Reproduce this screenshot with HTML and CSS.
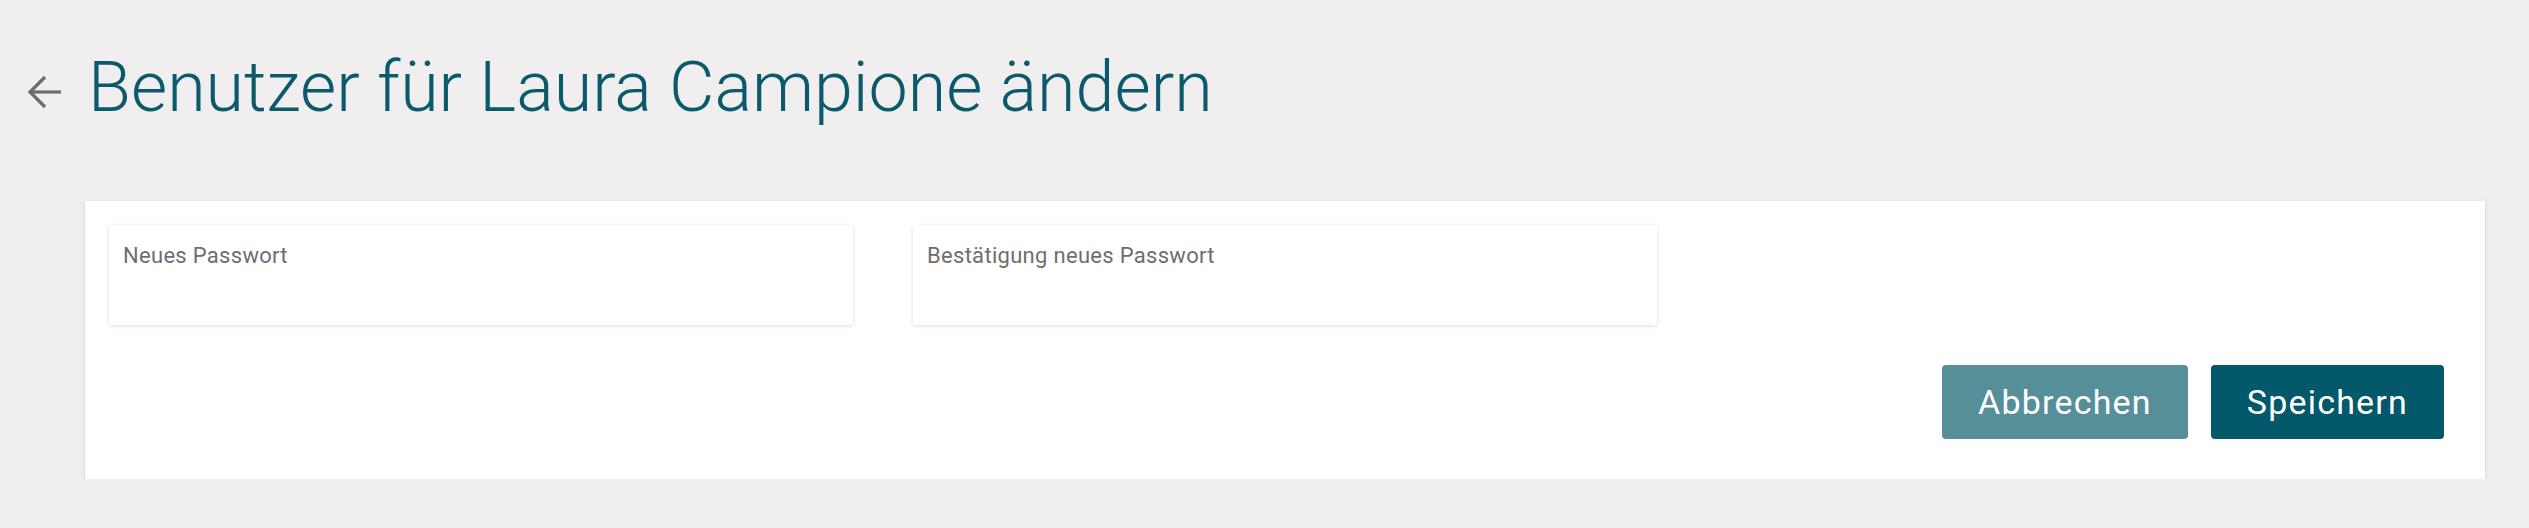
FILE: index.html
```html
<!DOCTYPE html>
<html lang="de">
<head>
<meta charset="utf-8">
<title>Benutzer ändern</title>
<link rel="stylesheet" href="styles.css">
</head>
<body>
<header class="page-header">
  <a class="back" href="#" aria-label="Zurück">
    <svg width="36" height="36" viewBox="0 0 36 36" fill="none" stroke="#6c6c6c" stroke-width="3.2" stroke-linecap="butt" stroke-linejoin="miter">
      <path d="M3 18 H34"/>
      <path d="M18 3 L3 18 L18 33"/>
    </svg>
  </a>
  <h1 class="title">Benutzer für Laura Campione ändern</h1>
</header>
<main class="content">
  <section class="card">
    <div class="fields">
      <label class="field"><span class="field-label">Neues Passwort</span></label>
      <label class="field"><span class="field-label">Bestätigung neues Passwort</span></label>
    </div>
    <div class="actions">
      <button class="btn btn-secondary" type="button">Abbrechen</button>
      <button class="btn btn-primary" type="button">Speichern</button>
    </div>
  </section>
</main>
</body>
</html>
```
FILE: styles.css
```css
* { box-sizing: border-box; }

html, body {
  margin: 0;
  padding: 0;
  background: #f0eeef;
  font-family: Roboto, "Liberation Sans", Arial, sans-serif;
}

.page-header {
  display: flex;
  align-items: center;
  padding: 46px 0 0 27px;
  height: 128px;
}

.back {
  display: flex;
  width: 36px;
  height: 36px;
  margin-top: 10px;
  margin-right: 25px;
}

.title {
  margin: 0;
  font-size: 70px;
  line-height: 82px;
  font-weight: 300;
  color: #0b5a6b;
  white-space: nowrap;
}

.content {
  padding: 73px 44px 0 85px;
}

.card {
  background: #ffffff;
  padding: 24px 41px 40px 24px;
  box-shadow: 0 1px 4px rgba(0, 0, 0, 0.12);
}

.fields {
  display: flex;
  gap: 60px;
}

.field {
  display: block;
  width: 744px;
  height: 100px;
  padding: 18px 14px 0;
  background: #ffffff;
  box-shadow: 0 1px 4px rgba(0, 0, 0, 0.14);
  border-radius: 2px;
}

.field-label {
  display: block;
  font-size: 22px;
  line-height: 26px;
  color: #6e6e6e;
  letter-spacing: 0.3px;
}

.actions {
  display: flex;
  justify-content: flex-end;
  gap: 23px;
  margin-top: 40px;
}

.btn {
  height: 74px;
  padding: 0 36px;
  border: none;
  border-radius: 4px;
  font-family: Roboto, "Liberation Sans", Arial, sans-serif;
  font-size: 34px;
  font-weight: 400;
  color: #ffffff;
  letter-spacing: 1.2px;
  cursor: pointer;
}

.btn-secondary { background: #578f99; }
.btn-primary { background: #03586a; }
```
